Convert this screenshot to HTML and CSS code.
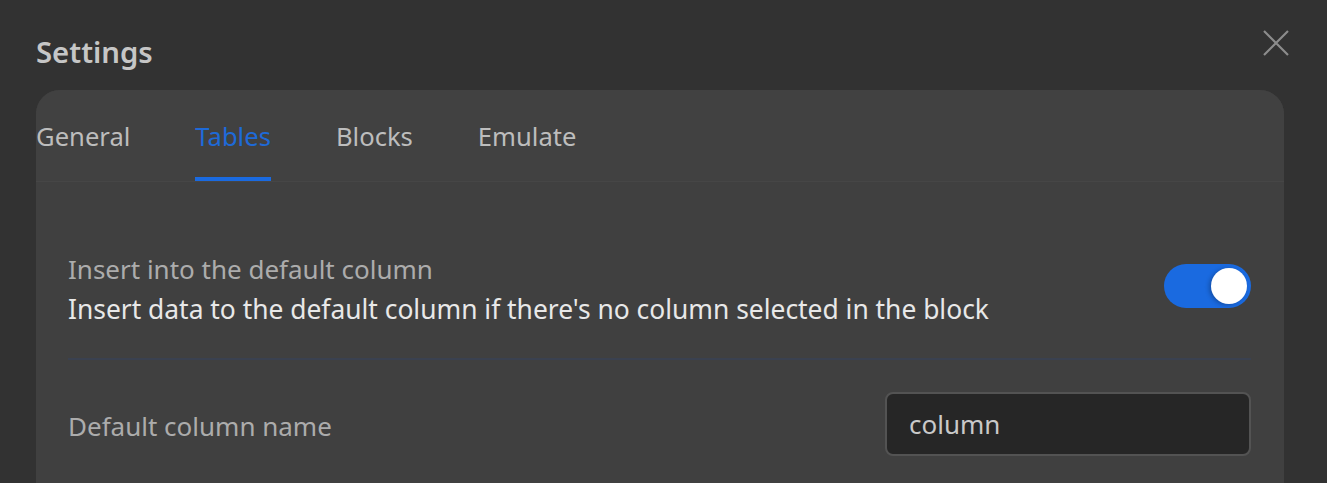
FILE: index.html
```html
<!DOCTYPE html>
<html lang="en">
<head>
<meta charset="utf-8">
<link rel="stylesheet" href="styles.css">
</head>
<body>
<div class="dialog">
  <header class="dialog-head">
    <h1 class="title">Settings</h1>
    <button class="close" aria-label="Close">
      <svg width="26" height="26" viewBox="0 0 26 26"><path d="M1 1 L25 25 M25 1 L1 25" stroke="#8c8c8c" stroke-width="2.2" fill="none"/></svg>
    </button>
  </header>
  <section class="panel">
    <nav class="tabs">
      <span class="tab">General</span>
      <span class="tab active">Tables</span>
      <span class="tab">Blocks</span>
      <span class="tab">Emulate</span>
    </nav>
    <div class="content">
      <div class="row row-toggle">
        <div class="texts">
          <div class="label">Insert into the default column</div>
          <div class="desc">Insert data to the default column if there's no column selected in the block</div>
        </div>
        <div class="toggle"><div class="knob"></div></div>
      </div>
      <div class="row row-input">
        <div class="label">Default column name</div>
        <div class="input">column</div>
      </div>
    </div>
  </section>
</div>
</body>
</html>
```

FILE: styles.css
```css
* { box-sizing: border-box; }
html, body { margin: 0; padding: 0; height: 100%; overflow: hidden; }
body {
  background: #323232;
  font-family: "Noto Sans", "Open Sans", sans-serif;
}
.dialog {
  padding: 0 43px 0 36px;
}
.dialog-head {
  display: flex;
  justify-content: space-between;
  align-items: flex-start;
  height: 90px;
}
.title {
  margin: 0;
  padding-top: 32px;
  font-size: 29.3px;
  line-height: 40px;
  font-weight: 600;
  color: #c6c6c6;
}
.close {
  background: none;
  border: 0;
  padding: 0;
  margin-right: -5px;
  margin-top: 30px;
  width: 26px;
  height: 26px;
  display: flex;
}
.panel {
  background: #404040;
  border-radius: 24px 24px 0 0;
  height: 400px;
}
.tabs {
  display: flex;
  gap: 65px;
  height: 92px;
  border-bottom: 1px solid #464646;
  background: #414141;
  border-radius: 24px 24px 0 0;
}
.tab {
  font-size: 25.6px;
  line-height: 36px;
  color: #bdbdbd;
  padding-top: 29px;
  height: 91px;
  border-bottom: 4px solid transparent;
}
.tab.active {
  color: #1e6ad8;
  border-bottom-color: #1a6ae0;
}
.content {
  padding: 0 33px 0 32px;
}
.row {
  display: flex;
  align-items: center;
  justify-content: space-between;
}
.row-toggle {
  padding-top: 71px;
  padding-bottom: 29px;
  border-bottom: 2px solid #3a4150;
  align-items: flex-start;
}
.label {
  font-size: 26px;
  color: #acacac;
  line-height: 32px;
}
.desc {
  font-size: 26.4px;
  color: #e8e8e8;
  line-height: 40px;
  margin-top: 4px;
}
.toggle {
  width: 87px;
  height: 44px;
  background: #1a6ae0;
  border-radius: 22px;
  margin-top: 11px;
  display: flex;
  justify-content: flex-end;
  align-items: center;
  padding-right: 4px;
}
.knob {
  width: 36px;
  height: 36px;
  border-radius: 50%;
  background: #ffffff;
  box-shadow: -2px 1px 4px rgba(0,0,0,0.25);
}
.row-input {
  padding-top: 32px;
}
.row-input .label {
  padding-top: 4px;
}
.input {
  width: 366px;
  height: 64px;
  background: #262626;
  border: 2px solid #535353;
  border-radius: 8px;
  color: #c9c9c9;
  font-size: 26px;
  padding-left: 22px;
  display: flex;
  align-items: center;
}
```
